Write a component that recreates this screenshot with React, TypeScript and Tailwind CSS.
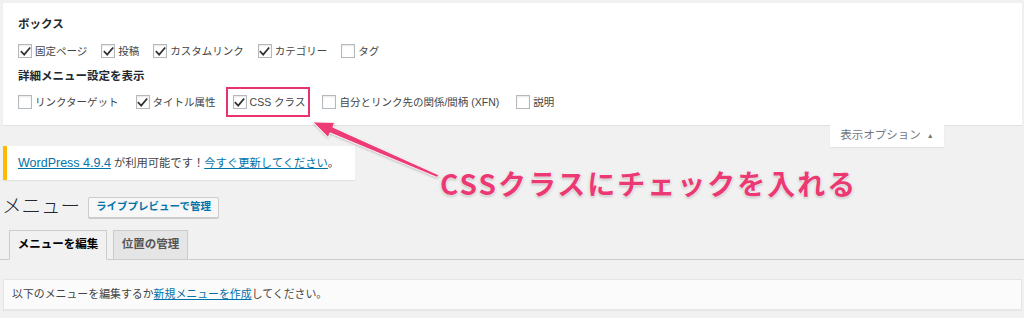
import React from "react";

const font = "font-['Liberation_Sans','Noto_Sans_CJK_JP',sans-serif]";

const Check = ({checked}: { checked: boolean }) => (
    <span
        className="w-[14px] h-[14px] shrink-0 border border-[#b4b9be] bg-white shadow-[inset_0_1px_2px_rgba(0,0,0,0.1)] flex items-center justify-center">
        {checked && (
            <svg width="11" height="11" viewBox="0 0 11 11">
                <path d="M1.5 5.8 L4.2 8.6 L9.6 2.2" fill="none" stroke="#333" strokeWidth="1.8"
                      strokeLinecap="square"/>
            </svg>
        )}
    </span>
);

const Item = ({label, checked, boxed}: { label: string; checked: boolean; boxed?: boolean }) => (
    <span className="relative flex items-center gap-[3px]">
        <Check checked={checked}/>
        <span>{label}</span>
        {boxed && (
            <span className="absolute -left-[7px] -right-[5px] -top-[6px] -bottom-[6px] border-[2.5px] border-[#e8336d]"/>
        )}
    </span>
);

const App = () => {
    const row1 = [
        {label: "固定ページ", checked: true},
        {label: "投稿", checked: true},
        {label: "カスタムリンク", checked: true},
        {label: "カテゴリー", checked: true},
        {label: "タグ", checked: false},
    ];
    const row2 = [
        {label: "リンクターゲット", checked: false},
        {label: "タイトル属性", checked: true},
        {label: "CSS クラス", checked: true, boxed: true},
        {label: "自分とリンク先の関係/間柄 (XFN)", checked: false},
        {label: "説明", checked: false},
    ];

    return (
        <div className={`relative w-[1024px] h-[318px] overflow-hidden bg-[#f1f1f1] text-[#444] ${font}`}>
            {/* Screen options panel */}
            <div
                className="mt-[3px] ml-[3px] mr-[2px] bg-white shadow-[0_1px_1px_rgba(0,0,0,0.06)] pt-[12px] px-[15px] pb-[14px]">
                <h5 className="text-[11.5px] leading-[18px] font-bold text-[#23282d]">ボックス</h5>
                <div className="mt-[9px] flex items-center gap-[14px] text-[10.5px] leading-[18px]">
                    {row1.map((r) => <Item key={r.label} {...r}/>)}
                </div>
                <h5 className="mt-[7px] text-[11.5px] leading-[18px] font-bold text-[#23282d]">詳細メニュー設定を表示</h5>
                <div className="mt-[8px] flex items-center gap-[17px] text-[10.5px] leading-[18px]">
                    {row2.map((r) => <Item key={r.label} {...r}/>)}
                </div>
            </div>

            {/* Screen options tab */}
            <div className="flex justify-end pr-[80px]">
                <div
                    className="w-[114px] h-[22px] bg-white shadow-[0_1px_1px_rgba(0,0,0,0.06)] flex items-center justify-center gap-[6px] text-[11.5px] text-[#72777c]">
                    <span>表示オプション</span>
                    <span className="text-[7px]">▲</span>
                </div>
            </div>

            {/* Update notice */}
            <div
                className="-mt-[1px] ml-[3px] w-[352px] h-[34px] bg-white border-l-4 border-[#ffb900] shadow-[0_1px_1px_rgba(0,0,0,0.06)] pl-[11px] flex items-center text-[11.3px]">
                <a className="text-[#0073aa] underline text-[12.5px]">WordPress 4.9.4</a>
                <span className="ml-[3px]">が利用可能です！</span>
                <a className="text-[#0073aa] underline">今すぐ更新してください</a>
                <span>。</span>
            </div>

            {/* Title */}
            <div className="mt-[15px] ml-[2px] h-[24px] flex items-center gap-[8px]">
                <h1 className="text-[19.5px] font-light text-[#23282d]">メニュー</h1>
                <button
                    className="h-[21px] px-[7px] border border-[#ccc] bg-[#f7f7f7] rounded-[2px] shadow-[0_1px_0_#ccc] text-[10.5px] font-semibold text-[#0073aa]">
                    ライブプレビューで管理
                </button>
            </div>

            {/* Tabs */}
            <div className="mt-[11px] flex items-end gap-[6px] pl-[9px] border-b border-[#ccc] h-[30px]">
                <div
                    className="w-[98px] h-[30px] -mb-px border border-[#ccc] border-b-[#f1f1f1] bg-[#f1f1f1] flex items-center justify-center text-[11.5px] font-bold text-black">
                    メニューを編集
                </div>
                <div
                    className="w-[75px] h-[29px] border border-b-0 border-[#ccc] bg-[#e5e5e5] flex items-center justify-center text-[11.5px] font-bold text-[#555]">
                    位置の管理
                </div>
            </div>

            {/* Manage menus */}
            <div
                className="mt-[19px] ml-[3px] mr-[2px] h-[31px] bg-[#fbfbfb] border border-[#e5e5e5] shadow-[0_1px_1px_rgba(0,0,0,0.04)] pl-[8px] flex items-center text-[10.9px]">
                <span>以下のメニューを編集するか</span>
                <a className="text-[#0073aa] underline">新規メニューを作成</a>
                <span>してください。</span>
            </div>

            {/* Annotation arrow */}
            <svg className="absolute inset-0 pointer-events-none" width="1024" height="318" viewBox="0 0 1024 318">
                <defs>
                    <filter id="sh" x="-20%" y="-20%" width="140%" height="140%">
                        <feDropShadow dx="0" dy="1" stdDeviation="1" floodColor="#000" floodOpacity="0.25"/>
                    </filter>
                </defs>
                <g filter="url(#sh)" fill="#ec3a74" stroke="#fff" strokeWidth="0.8" strokeLinejoin="round">
                    <path
                        d="M313 122 L334.6 122.5 L332.8 127.2 L438.8 175.0 L437.2 177.4 L330.0 132.8 L328.2 137.3 Z"/>
                </g>
            </svg>

            {/* Annotation text */}
            <div
                className="absolute left-[440px] top-[165px] text-[28px] leading-[36px] font-bold tracking-[2px] text-[#eb3a73] [text-shadow:0_0_2px_#fff,0_0_2px_#fff,0_1px_3px_rgba(0,0,0,0.35)] font-['Noto_Sans_CJK_JP',sans-serif]">
                CSSクラスにチェックを入れる
            </div>
        </div>
    );
};

export default App;
